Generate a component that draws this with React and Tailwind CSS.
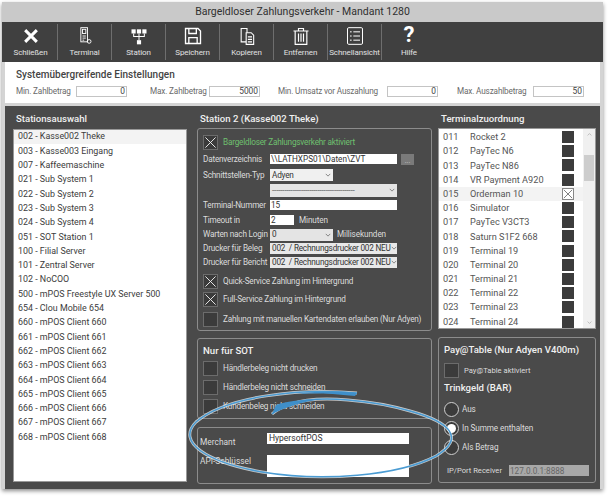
const STATIONS = [
  "002 - Kasse002 Theke",
  "003 - Kasse003 Eingang",
  "007 - Kaffeemaschine",
  "021 - Sub System 1",
  "022 - Sub System 2",
  "023 - Sub System 3",
  "024 - Sub System 4",
  "051 - SOT Station 1",
  "100 - Filial Server",
  "101 - Zentral Server",
  "102 - NoCOO",
  "500 - mPOS Freestyle UX Server 500",
  "654 - Clou Mobile 654",
  "660 - mPOS Client 660",
  "661 - mPOS Client 661",
  "662 - mPOS Client 662",
  "663 - mPOS Client 663",
  "664 - mPOS Client 664",
  "665 - mPOS Client 665",
  "666 - mPOS Client 666",
  "667 - mPOS Client 667",
  "668 - mPOS Client 668",
];

const TERMINALS = [
  ["011", "Rocket 2"],
  ["012", "PayTec N6"],
  ["013", "PayTec N86"],
  ["014", "VR Payment A920"],
  ["015", "Orderman 10"],
  ["016", "Simulator"],
  ["017", "PayTec V3CT3"],
  ["018", "Saturn S1F2 668"],
  ["019", "Terminal 19"],
  ["020", "Terminal 20"],
  ["021", "Terminal 21"],
  ["022", "Terminal 22"],
  ["023", "Terminal 23"],
  ["024", "Terminal 24"],
];

const icons = {
  close: (
    <path d="M5 5 L19 19 M19 5 L5 19" stroke="white" strokeWidth="3.6" fill="none" />
  ),
  terminal: (
    <g stroke="white" strokeWidth="1.1" fill="none">
      <rect x="7" y="2" width="8" height="17" />
      <rect x="9" y="4" width="4" height="5" />
      <path d="M9 12h4M9 14.5h4M9 17h2" />
      <circle cx="17" cy="18.5" r="2.2" />
    </g>
  ),
  station: (
    <g fill="white">
      <rect x="3" y="4" width="5" height="5" />
      <rect x="9.5" y="4" width="5" height="5" />
      <rect x="16" y="4" width="5" height="5" />
      <rect x="9.5" y="17" width="5" height="5" />
      <path d="M5 9h1.2v3H11.4V9h1.2v3h5.2V9H19v4.2h-6.4V17h-1.2v-3.8H5z" />
    </g>
  ),
  save: (
    <g stroke="white" strokeWidth="1.6" fill="none">
      <path d="M3 3h15l3 3v15H3z" />
      <path d="M7 3v6h9V3M7 21v-7h10v7" />
    </g>
  ),
  copy: (
    <g stroke="white" strokeWidth="1.3" fill="none">
      <path d="M5 3h7v16H5z" />
      <path d="M11 8h6l3 3v11h-9z" fill="#404040" />
      <path d="M13 13h5M13 16h5M13 19h5" />
    </g>
  ),
  trash: (
    <g stroke="white" strokeWidth="1.4" fill="none">
      <path d="M3 6h18M9 6V3h6v3M5 6v16h14V6" />
      <path d="M9 9v10M12 9v10M15 9v10" />
    </g>
  ),
  list: (
    <g stroke="white" strokeWidth="1.2" fill="none">
      <rect x="3" y="2" width="18" height="20" rx="1.5" />
      <path d="M10 7h8M10 12h8M10 17h8M6 7h2M6 12h2M6 17h2" />
    </g>
  ),
};

function ToolButton({ icon, label, last }) {
  return (
    <div
      className={`flex h-[36px] w-[54px] shrink-0 flex-col items-center justify-between border-[#6e6e6e] ${
        last ? "" : "border-r"
      }`}
    >
      {icon === "help" ? (
        <span className="h-[22px] text-[22px] leading-[22px] font-bold text-white">?</span>
      ) : (
        <svg viewBox="0 0 24 24" className="mt-[2px] h-[20px] w-[20px]">
          {icons[icon]}
        </svg>
      )}
      <span className="mb-[1px] text-[8px] leading-[12px] tracking-[-0.1px] whitespace-nowrap text-[#e0e0e0]">
        {label}
      </span>
    </div>
  );
}

function TopField({ label, labelWidth, value }) {
  return (
    <div className="flex items-center">
      <span className={`text-[8.2px] tracking-[-0.15px] whitespace-nowrap text-[#6a6a6a] ${labelWidth}`}>{label}</span>
      <div className="flex h-[11px] w-[51px] items-center justify-end border border-[#c4c4c4] pr-[1px] text-[8.4px] text-[#444]">
        {value}
      </div>
    </div>
  );
}

function CheckBox({ checked }) {
  return (
    <div className="flex h-[15px] w-[15px] shrink-0 items-center justify-center border border-[#6c6c6c] bg-[#3b3b3b]">
      {checked ? (
        <svg viewBox="0 0 14 14" className="h-full w-full">
          <path d="M1.5 1.5 L12.5 12.5 M12.5 1.5 L1.5 12.5" stroke="#f0f0f0" strokeWidth="1" />
        </svg>
      ) : null}
    </div>
  );
}

function CheckRow({ checked, label, className = "", labelClass = "text-[#dcdcdc]" }) {
  return (
    <div className={`flex h-[15px] items-center gap-[5px] ${className}`}>
      <CheckBox checked={checked} />
      <span className={`text-[8.2px] leading-none tracking-[-0.2px] whitespace-nowrap ${labelClass}`}>{label}</span>
    </div>
  );
}

function FormRow({ label, height, children }) {
  return (
    <div className={`flex items-center ${height}`}>
      <span className="w-[67px] shrink-0 text-[8.2px] tracking-[-0.2px] whitespace-nowrap text-[#dcdcdc]">
        {label}
      </span>
      {children}
    </div>
  );
}

function Chevron() {
  return (
    <svg viewBox="0 0 8 8" className="h-[6px] w-[6px] shrink-0">
      <path d="M1 2.5 L4 5.5 L7 2.5" stroke="#666" strokeWidth="1" fill="none" />
    </svg>
  );
}

function SelectBox({ value, className = "" }) {
  return (
    <div
      className={`flex items-center justify-between overflow-hidden px-[2px] text-[8.2px] leading-none tracking-[-0.2px] text-[#333] ${className}`}
    >
      <span className="whitespace-pre">{value}</span>
      <Chevron />
    </div>
  );
}

function Radio({ on, label }) {
  return (
    <div className="flex h-[19px] items-center gap-[3px]">
      <div className="flex h-[15px] w-[15px] items-center justify-center rounded-full border border-[#d0d0d0] bg-[#3b3b3b]">
        {on ? <div className="h-[9px] w-[9px] rounded-full bg-white" /> : null}
      </div>
      <span className="text-[8.2px] tracking-[-0.1px] text-[#dcdcdc]">{label}</span>
    </div>
  );
}

function HeadLabel({ children, className = "" }) {
  return (
    <div className={`text-[9.6px] leading-none font-medium whitespace-nowrap text-[#f0f0f0] ${className}`}>
      {children}
    </div>
  );
}

function CheckBoxDark({ checked }) {
  return (
    <div
      className={`flex h-[12px] w-[12px] shrink-0 items-center justify-center ${
        checked ? "border border-[#888] bg-white" : "bg-[#3c3c3c]"
      }`}
    >
      {checked ? (
        <svg viewBox="0 0 12 12" className="h-full w-full">
          <path d="M1 1 L11 11 M11 1 L1 11" stroke="#555" strokeWidth="0.9" />
        </svg>
      ) : null}
    </div>
  );
}

const RING =
  "M357 393 C300 388 226 396 196 422 C176 442 206 462 262 472 C322 482 398 476 436 456 C466 438 450 422 410 411 C376 401 318 394 292 404 C282 407 276 410 272 414";

function Annotation() {
  return (
    <svg viewBox="0 0 609 500" className="pointer-events-none absolute top-0 left-0 h-[500px] w-[609px]">
      <path d={RING} fill="none" stroke="white" strokeWidth="3" opacity="0.7" />
      <path d={RING} fill="none" stroke="#4b9cd3" strokeWidth="1.5" />
      <path d="M272 414 L276 405 C290 400 310 399 322 399 C300 402 284 408 272 414 Z" fill="#3f8fc9" />
      <path d="M357 393 L355 396 C330 393 310 393 296 394 C320 391 340 391 357 393 Z" fill="#3f8fc9" />
    </svg>
  );
}

export default function App() {
  return (
    <div
      className="relative h-[500px] w-[609px] overflow-hidden bg-white"
      style={{ fontFamily: 'Roboto, "Open Sans", sans-serif' }}
    >
      <div className="mt-[2px] ml-[2px] flex h-[487px] w-[601px] flex-col bg-[#d4d4d4] shadow-[0_2px_4px_rgba(0,0,0,0.45)]">
        <div className="flex h-[20px] shrink-0 items-center justify-center bg-[#c9c9c9] text-[10.5px] text-[#303030]">
          Bargeldloser Zahlungsverkehr - Mandant 1280
        </div>

        <div className="flex h-[40px] shrink-0 items-center bg-[#404040] pl-[2px]">
          <ToolButton icon="close" label="Schließen" />
          <ToolButton icon="terminal" label="Terminal" />
          <ToolButton icon="station" label="Station" />
          <ToolButton icon="save" label="Speichern" />
          <ToolButton icon="copy" label="Kopieren" />
          <ToolButton icon="trash" label="Entfernen" />
          <ToolButton icon="list" label="Schnellansicht" />
          <ToolButton icon="help" label="Hilfe" last />
        </div>

        <div className="mx-[3px] flex h-[41px] shrink-0 flex-col bg-white pt-[7px] pl-[11px]">
          <div className="text-[10px] leading-[12px] font-medium text-[#444]">
            Systemübergreifende Einstellungen
          </div>
          <div className="mt-[4px] flex items-center">
            <TopField label="Min. Zahlbetrag" labelWidth="w-[60px]" value="0" />
            <div className="w-[23px]" />
            <TopField label="Max. Zahlbetrag" labelWidth="w-[59px]" value="5000" />
            <div className="w-[18px]" />
            <TopField label="Min. Umsatz vor Auszahlung" labelWidth="w-[109px]" value="0" />
            <div className="w-[19px]" />
            <TopField label="Max. Auszahlbetrag" labelWidth="w-[76px]" value="50" />
          </div>
        </div>

        <div className="mx-[3px] mt-[3px] flex h-[383px] shrink-0 bg-[#4a4a4a] pl-[8px]">
          <div className="flex w-[174px] shrink-0 flex-col pt-[8px]">
            <HeadLabel className="h-[15px] pl-[3px]">Stationsauswahl</HeadLabel>
            <div className="h-[353px] border border-[#999] bg-white">
              {STATIONS.map((name, i) => (
                <div
                  key={name}
                  className={`flex h-[14.3px] items-center pl-[4px] text-[8.9px] whitespace-nowrap text-[#3c3c3c] ${
                    i === 0 ? "bg-[#f3f3f3]" : ""
                  }`}
                >
                  {name}
                </div>
              ))}
            </div>
          </div>

          <div className="ml-[10px] flex w-[235px] shrink-0 flex-col pt-[8px]">
            <HeadLabel className="h-[14px] pl-[3px]">Station 2 (Kasse002 Theke)</HeadLabel>
            <div className="h-[203px] rounded-[3px] border border-[#8c8c8c] px-[5px] pt-[6px]">
              <CheckRow checked label="Bargeldloser Zahlungsverkehr aktiviert" labelClass="text-[#6fc06f]" />
              <FormRow label="Datenverzeichnis" height="h-[18px]">
                <div className="flex h-[10px] w-[127px] items-center bg-white pl-[1px] text-[8.2px] leading-none text-[#333]">
                  \\LATHXPS01\Daten\ZVT
                </div>
                <div className="ml-[4px] flex h-[11px] w-[13px] items-end justify-center bg-[#7a7a7a] text-[7px] leading-none text-[#ccc]">
                  ...
                </div>
              </FormRow>
              <FormRow label="Schnittstellen-Typ" height="h-[14px]">
                <SelectBox value="Adyen" className="h-[12px] w-[63px] bg-[#f0f0f0]" />
              </FormRow>
              <FormRow label="" height="h-[16px]">
                <SelectBox value="----------------------------------------" className="h-[13px] w-[127px] bg-[#e4e4e4] text-[#666]" />
              </FormRow>
              <FormRow label="Terminal-Nummer" height="h-[14px]">
                <div className="flex h-[10px] w-[127px] items-center bg-white pl-[1px] text-[8.2px] leading-none text-[#333]">15</div>
              </FormRow>
              <FormRow label="Timeout in" height="h-[16px]">
                <div className="flex h-[10px] w-[24px] items-center bg-white pl-[1px] text-[8.2px] leading-none text-[#333]">2</div>
                <span className="ml-[5px] text-[8.2px] tracking-[-0.1px] text-[#dcdcdc]">Minuten</span>
              </FormRow>
              <FormRow label="Warten nach Login" height="h-[13px]">
                <SelectBox value="0" className="h-[12px] w-[63px] bg-[#e4e4e4]" />
                <span className="ml-[4px] text-[8.2px] tracking-[-0.1px] text-[#dcdcdc]">Millisekunden</span>
              </FormRow>
              <FormRow label="Drucker für Beleg" height="h-[14px]">
                <SelectBox value="002  / Rechnungsdrucker 002 NEU" className="h-[11px] w-[127px] bg-[#e8e8e8]" />
              </FormRow>
              <FormRow label="Drucker für Bericht" height="h-[14px]">
                <SelectBox value="002  / Rechnungsdrucker 002 NEU" className="h-[11px] w-[127px] bg-[#e8e8e8]" />
              </FormRow>
              <CheckRow checked label="Quick-Service Zahlung im Hintergrund" className="mt-[5px]" />
              <CheckRow checked label="Full-Service Zahlung im Hintergrund" className="mt-[3px]" />
              <CheckRow label="Zahlung mit manuellen Kartendaten erlauben (Nur Adyen)" className="mt-[5px]" />
            </div>

            <div className="mt-[7px] h-[81px] rounded-[3px] border border-[#8c8c8c] px-[5px] pt-[7px]">
              <HeadLabel className="h-[12px]">Nur für SOT</HeadLabel>
              <CheckRow label="Händlerbeleg nicht drucken" className="mt-[3px]" />
              <CheckRow label="Händlerbeleg nicht schneiden" className="mt-[4px]" />
              <CheckRow label="Kundenbeleg nicht schneiden" className="mt-[4px]" />
            </div>

            <div className="mt-[8px] h-[57px] rounded-[3px] border border-[#8c8c8c] pt-[5px] pl-[2px]">
              <div className="flex h-[11px] items-start">
                <span className="mt-[3px] w-[67px] text-[8.4px] leading-[12px] text-[#dcdcdc]">Merchant</span>
                <div className="flex h-[11px] w-[142px] items-center bg-white pl-[2px] text-[8.5px] leading-none text-[#333]">
                  HypersoftPOS
                </div>
              </div>
              <div className="mt-[11px] flex items-start">
                <span className="w-[67px] text-[8.4px] leading-[12px] text-[#dcdcdc]">API-Schlüssel</span>
                <div className="h-[22px] w-[142px] bg-white" />
              </div>
            </div>
          </div>

          <div className="ml-[6px] flex w-[158px] shrink-0 flex-col pt-[8px]">
            <HeadLabel className="h-[14px] pl-[3px]">Terminalzuordnung</HeadLabel>
            <div className="flex h-[201px] border border-[#999] bg-white">
              <div className="min-w-0 flex-1 pt-[1px]">
                {TERMINALS.map(([nr, name], i) => (
                  <div
                    key={nr}
                    className={`flex h-[14.2px] items-center pl-[4px] text-[9.2px] text-[#555] ${
                      i === 4 ? "bg-[#f3f3f3]" : ""
                    }`}
                  >
                    <span className="w-[27px] shrink-0">{nr}</span>
                    <span className="w-[92px] shrink-0 whitespace-nowrap">{name}</span>
                    <CheckBoxDark checked={i === 4} />
                  </div>
                ))}
              </div>
              <div className="flex w-[12px] shrink-0 flex-col items-center justify-between bg-[#f0f0f0] py-[3px]">
                <svg viewBox="0 0 8 8" className="h-[5px] w-[5px]">
                  <path d="M1 5.5 L4 2.5 L7 5.5" stroke="#a0a0a0" fill="none" />
                </svg>
                <div className="-mt-[3px] h-[26px] w-[10px] bg-[#cdcdcd]" />
                <div className="h-[96px]" />
                <svg viewBox="0 0 8 8" className="h-[5px] w-[5px]">
                  <path d="M1 2.5 L4 5.5 L7 2.5" stroke="#a0a0a0" fill="none" />
                </svg>
              </div>
            </div>

            <div className="mt-[8px] h-[146px] rounded-[3px] border border-[#8c8c8c] px-[5px] pt-[7px]">
              <HeadLabel className="h-[12px]">Pay@Table (Nur Adyen V400m)</HeadLabel>
              <div className="mt-[6px] flex h-[15px] items-center gap-[5px]">
                <CheckBox />
                <span className="text-[7.6px] text-[#dcdcdc]">Pay@Table aktiviert</span>
              </div>
              <HeadLabel className="mt-[5px] h-[12px]">Trinkgeld (BAR)</HeadLabel>
              <div className="mt-[5px]">
                <Radio label="Aus" />
                <Radio on label="In Summe enthalten" />
                <Radio label="Als Betrag" />
              </div>
              <div className="mt-[8px] flex items-center pl-[3px]">
                <span className="w-[62px] shrink-0 text-[7.6px] whitespace-nowrap text-[#dcdcdc]">IP/Port Receiver</span>
                <div className="flex h-[11px] w-[80px] items-center bg-[#a8a8a8] pl-[1px] text-[8.2px] leading-none text-[#666]">
                  127.0.0.1:8888
                </div>
              </div>
            </div>
          </div>
        </div>
      </div>
      <Annotation />
    </div>
  );
}
